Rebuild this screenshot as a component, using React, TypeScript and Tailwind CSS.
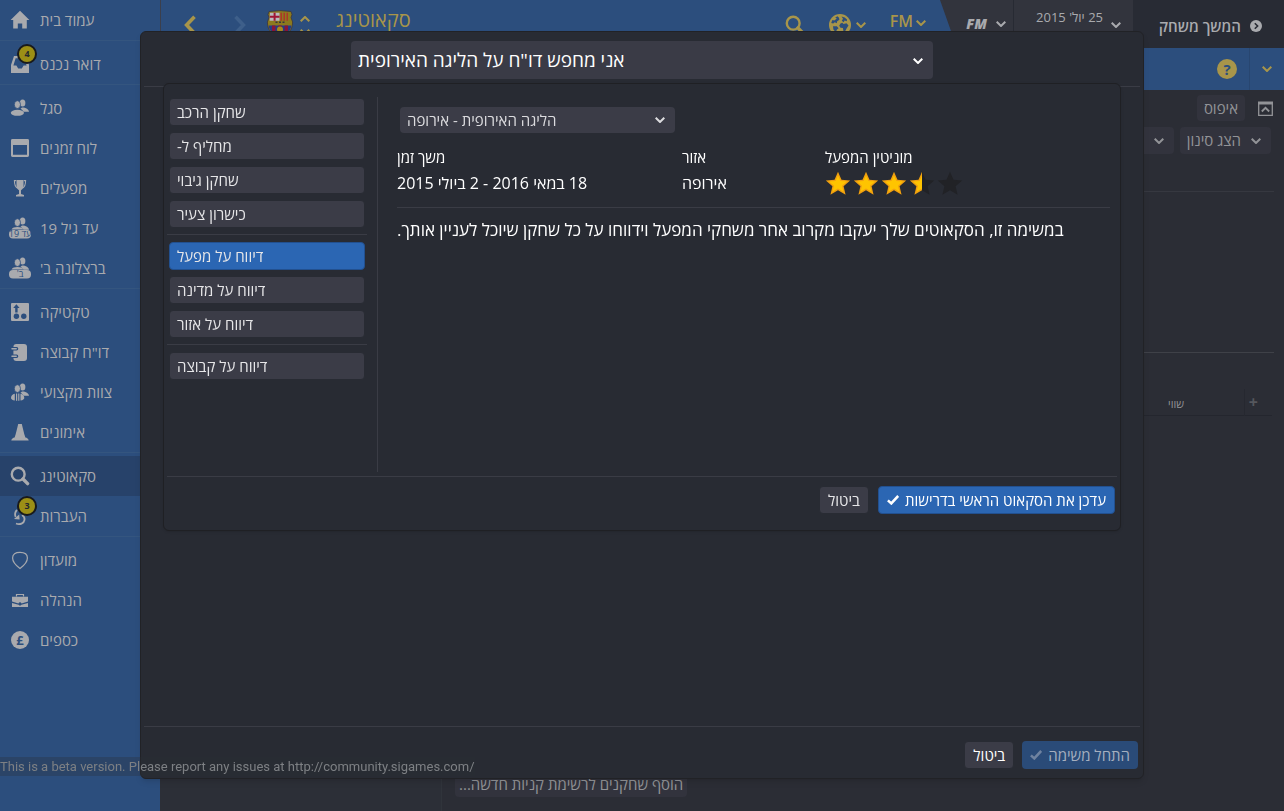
import type { ReactNode } from 'react';
import { clsx } from 'clsx';

type IconProps = { className?: string };

type NavItem = {
  label: string;
  icon: (props: IconProps) => ReactNode;
  badge?: number;
  active?: boolean;
};

function ChevronDown({ className }: IconProps) {
  return (
    <svg viewBox="0 0 10 6" className={clsx('h-[6px] w-[10px] shrink-0', className)} fill="none" stroke="currentColor" strokeWidth="2" aria-hidden="true">
      <path d="M0.7 0.7 5 5 9.3 0.7" />
    </svg>
  );
}

function ChevronLeft({ className }: IconProps) {
  return (
    <svg viewBox="0 0 12 20" className={clsx('h-5 w-3', className)} fill="none" stroke="currentColor" strokeWidth="3.6" aria-hidden="true">
      <path d="M10.5 1.8 2.6 10l7.9 8.2" />
    </svg>
  );
}

function Check({ className }: IconProps) {
  return (
    <svg viewBox="0 0 12 10" className={clsx('h-[10px] w-3 shrink-0', className)} fill="none" stroke="currentColor" strokeWidth="2.6" aria-hidden="true">
      <path d="M0.9 5.4 4.3 8.4 11.2 1" />
    </svg>
  );
}

function SearchIcon({ className }: IconProps) {
  return (
    <svg viewBox="0 0 20 20" className={className} fill="none" stroke="currentColor" aria-hidden="true">
      <circle cx="8.2" cy="8.2" r="6.4" strokeWidth="2.4" />
      <path d="m13 13 4.6 4.6" strokeWidth="3.4" strokeLinecap="round" />
    </svg>
  );
}

function HomeIcon({ className }: IconProps) {
  return (
    <svg viewBox="0 0 20 20" className={className} fill="currentColor" aria-hidden="true">
      <path d="M10 .8.6 10h2.6v8.6h4.6v-5h4.4v5h4.6V10h2.6z" />
    </svg>
  );
}

function InboxIcon({ className }: IconProps) {
  return (
    <svg viewBox="0 0 20 20" className={className} fill="currentColor" fillRule="evenodd" aria-hidden="true">
      <path d="M4 2h12l3 9v8H1v-8zm1.6 2.2L3.4 11.6h3l1.8 2.8h3.6l1.8-2.8h3l-2.2-7.4z" />
    </svg>
  );
}

function PeopleHeads() {
  return (
    <>
      <ellipse cx="12.6" cy="5" rx="2.8" ry="3.5" />
      <path d="M12 9.4c4 0 7 2 7 4.4h-5.5c-.8-1.6-1.8-2.4-3-3z" />
      <ellipse cx="7.4" cy="6.6" rx="3.1" ry="3.9" stroke="#2c4e7d" strokeWidth=".8" />
    </>
  );
}

function SquadIcon({ className }: IconProps) {
  return (
    <svg viewBox="0 0 20 20" className={className} fill="currentColor" aria-hidden="true">
      <PeopleHeads />
      <ellipse cx="7.4" cy="14.8" rx="6.6" ry="3" />
    </svg>
  );
}

function TeamPillIcon({ className, text }: IconProps & { text: string }) {
  return (
    <span className={clsx('relative block', className)} aria-hidden="true">
      <svg viewBox="0 0 20 20" className="size-5 overflow-visible" fill="currentColor">
        <g transform="translate(0 -2)">
          <PeopleHeads />
          <path d="M1.5 13.4c1-1.6 3-2.4 6-2.4s5 .8 6 2.4z" />
        </g>
        <rect x="-1" y="12" width="22" height="8.5" rx="4" />
      </svg>
      <span dir="rtl" className="absolute inset-x-[-4px] top-[12px] text-center text-[9px] leading-[8px] whitespace-nowrap text-[#2c4e7d]">
        {text}
      </span>
    </span>
  );
}

function Under19Icon(props: IconProps) {
  return <TeamPillIcon {...props} text="עד 19" />;
}

function BTeamIcon(props: IconProps) {
  return <TeamPillIcon {...props} text="ב'" />;
}

function CalendarIcon({ className }: IconProps) {
  return (
    <svg viewBox="0 0 20 20" className={className} fill="currentColor" fillRule="evenodd" aria-hidden="true">
      <path d="M2.4 1h15.2A1.4 1.4 0 0 1 19 2.4v15.2a1.4 1.4 0 0 1-1.4 1.4H2.4A1.4 1.4 0 0 1 1 17.6V2.4A1.4 1.4 0 0 1 2.4 1zM3 7v9.8h14V7z" />
    </svg>
  );
}

function TrophyIcon({ className }: IconProps) {
  return (
    <svg viewBox="0 0 20 20" className={className} aria-hidden="true">
      <path d="M6.5 2h7v5.5c0 3-1.6 4.7-3.5 5.2-1.9-.5-3.5-2.2-3.5-5.2z" fill="currentColor" />
      <path d="M6.2 2.6H4.4c0 4 .8 6.6 3.2 7.6M13.8 2.6h1.8c0 4-.8 6.6-3.2 7.6" fill="none" stroke="currentColor" strokeWidth="1.1" />
      <path d="M9 12h2v4l3 1v1.5H6V17l3-1z" fill="currentColor" />
    </svg>
  );
}

function TacticsIcon({ className }: IconProps) {
  return (
    <svg viewBox="0 0 20 20" className={className} aria-hidden="true">
      <rect x="1" y="1" width="18" height="18" rx="1" fill="currentColor" />
      <g fill="#2c4e7d">
        <circle cx="6.4" cy="14.3" r="2.7" />
        <circle cx="13.8" cy="14.3" r="2.7" />
        <path d="M6.4 2.2 3.2 6h2v4.5h2.4V6h2z" />
      </g>
    </svg>
  );
}

function ReportIcon({ className }: IconProps) {
  return (
    <svg viewBox="0 0 20 20" className={className} aria-hidden="true">
      <rect x="3.4" y="2" width="13.6" height="17" rx="3" fill="currentColor" />
      <path d="M2 6.8h4.6M2 14.2h4.6" stroke="#2c4e7d" strokeWidth="3.4" strokeLinecap="round" />
      <path d="M2 6.8h4.2M2 14.2h4.2" stroke="currentColor" strokeWidth="1.5" strokeLinecap="round" />
    </svg>
  );
}

function StaffIcon({ className }: IconProps) {
  return (
    <svg viewBox="0 0 20 20" className={className} fill="currentColor" aria-hidden="true">
      <PeopleHeads />
      <path d="M4.8 11.8c-2.4.5-3.8 2-3.8 4.2 0 1.2 1.3 2.2 3.8 2.5zM6 11.5h1.2v7.2H6zM8.2 11.5h1.2v7.2H8.2zM10.5 11.8c2.4.5 3.8 2 3.8 4.2 0 1.2-1.3 2.2-3.8 2.5z" />
    </svg>
  );
}

function TrainingIcon({ className }: IconProps) {
  return (
    <svg viewBox="0 0 20 20" className={className} fill="currentColor" aria-hidden="true">
      <path d="M8.2 2h3.6c1.2 4.4 2 9.4 3.6 13.4 1.6.3 3 1 3.3 3.1H1.3c.3-2.1 1.7-2.8 3.3-3.1C6.2 11.4 7 6.4 8.2 2z" />
    </svg>
  );
}

function TransfersIcon({ className }: IconProps) {
  return (
    <svg viewBox="0 0 20 20" className={className} aria-hidden="true">
      <g fill="none" stroke="currentColor" strokeWidth="1.8">
        <path d="M7 4c-2 2-2.4 4.4-1.4 7" />
        <path d="M6 17.5c4 1.6 8-.2 8.5-3.6.3-2-.8-3.9-2.5-4.9" />
      </g>
      <path d="M4 13 9.2 8.6l.4 5z" fill="currentColor" />
    </svg>
  );
}

function ClubIcon({ className }: IconProps) {
  return (
    <svg viewBox="0 0 20 20" className={className} fill="none" stroke="currentColor" strokeWidth="1.2" aria-hidden="true">
      <path d="M10 18.4C5.5 15.2 2.6 12.2 2.6 8c0-3.8 2.8-5.6 7.4-5.6S17.4 4.2 17.4 8c0 4.2-2.9 7.2-7.4 10.4z" />
    </svg>
  );
}

function BoardIcon({ className }: IconProps) {
  return (
    <svg viewBox="0 0 20 20" className={className} fill="currentColor" aria-hidden="true">
      <path d="M6.5 6.5v-2h7v2" fill="none" stroke="currentColor" strokeWidth="1.2" />
      <path d="M2 6.8h16v4.8l-6.5 1.8a1.6 1.6 0 0 0-3 0L2 11.6zM2 13l6.6 1.8a1.6 1.6 0 0 0 2.8 0L18 13v4H2z" />
    </svg>
  );
}

function FinanceIcon({ className }: IconProps) {
  return (
    <span className={clsx('grid place-items-center', className)} aria-hidden="true">
      <span className="grid size-[18px] place-items-center rounded-full bg-[#a9aaae] text-[13px] leading-none font-bold text-[#2c4e7d]">£</span>
    </span>
  );
}

function ClubCrest() {
  return (
    <svg viewBox="0 0 28 30" className="h-[30px] w-7 shrink-0" aria-hidden="true">
      <path d="M3 1.5 14 .6l11 .9 1 3-1 3 1.6 4.5c0 9-5.6 13.6-12.6 17C7 25.6 1.4 21 1.4 12L3 7.5l-1-3z" fill="#8c7a1e" stroke="#3a3540" strokeWidth=".8" />
      <path d="M4 2.8h9.5v8H3.6z" fill="#b9b9bd" />
      <path d="M7.6 2.8h2v8h-2zM3.8 5.8h9.7v2H3.8z" fill="#a01535" />
      <path d="M14.5 2.8h1.4v8h-1.4zM17.5 2.8h1.4v8h-1.4zM20.5 2.8h1.4v8h-1.4z" fill="#b0302a" />
      <path d="M2.6 15.5h22.8c-.8 6-5 9.4-11.4 12.3C7.6 24.9 3.4 21.5 2.6 15.5z" fill="#243c86" />
      <path d="M6 15.5h3.4v9.3L6 22zM12.3 15.5h3.4v11.4l-1.7.9-1.7-.9zM18.6 15.5H22V22l-3.4 2.8z" fill="#8a1538" />
      <path d="M9.5 12.3h2M13 12.3h2M16.5 12.3h2" stroke="#3a3540" strokeWidth="1.4" />
      <circle cx="14" cy="19.5" r="3" fill="#a8891c" />
    </svg>
  );
}

function GlobeIcon() {
  return (
    <svg viewBox="0 0 22 22" className="size-[22px]" aria-hidden="true">
      <circle cx="11" cy="11" r="11" fill="#a8954a" />
      <path d="M8.5 2.2 6.2 3.5l1.6 1-2.4 2-2-.6-1.2 3 2 .6 1.6-1.2 2 1 .4-2 2.200-1.500-.4-2z" fill="#2c4e7d" />
      <path d="m12.5 2.4 1.5 2.4-1.2 2 1.8 1.4 1-1.6 2.2.6.2-1.8-2.3-1.8zM11.5 9.5l-1.3 2.2 1.3 2 2.4.3.6 3.4 1.5.2 1.7-3.4 1.8-2.6-2-2.4-3 .8-1.2-1.2zM4 12.2l.4 3.2 2.4 2.8 1.2-2.6 1.6-1.4-1.8-2z" fill="#2c4e7d" />
    </svg>
  );
}

const starPath = 'M13 .8l3.5 8 8.7.8-6.6 5.7 2 8.5-7.6-4.5-7.6 4.5 2-8.5L.8 9.6l8.7-.8z';

function Star({ fill }: { fill: 'full' | 'half' | 'empty' }) {
  return (
    <svg viewBox="0 0 26 25" className="h-[25px] w-[26px]" aria-hidden="true">
      <path d={starPath} fill="#212226" />
      {fill !== 'empty' && (
        <svg width={fill === 'half' ? 13 : 26} height="25">
          <path d={starPath} fill="#f0a010" />
          <path d="M13 4.5l2.5 5.5 6.4.6-4.9 4.1 1.5 6L13 17.6l-5.5 3.1 1.5-6-4.9-4.1 6.4-.6z" fill="#ffc400" />
        </svg>
      )}
    </svg>
  );
}

const navGroups: NavItem[][] = [
  [{ label: 'עמוד בית', icon: HomeIcon }],
  [{ label: 'דואר נכנס', icon: InboxIcon, badge: 4 }],
  [
    { label: 'סגל', icon: SquadIcon },
    { label: 'לוח זמנים', icon: CalendarIcon },
    { label: 'מפעלים', icon: TrophyIcon },
    { label: 'עד גיל 19', icon: Under19Icon },
    { label: "ברצלונה ב'", icon: BTeamIcon },
  ],
  [
    { label: 'טקטיקה', icon: TacticsIcon },
    { label: 'דו"ח קבוצה', icon: ReportIcon },
    { label: 'צוות מקצועי', icon: StaffIcon },
    { label: 'אימונים', icon: TrainingIcon },
  ],
  [
    { label: 'סקאוטינג', icon: SearchIcon, active: true },
    { label: 'העברות', icon: TransfersIcon, badge: 3 },
  ],
  [
    { label: 'מועדון', icon: ClubIcon },
    { label: 'הנהלה', icon: BoardIcon },
    { label: 'כספים', icon: FinanceIcon },
  ],
];

const assignmentGroups = [
  ['שחקן הרכב', 'מחליף ל-', 'שחקן גיבוי', 'כישרון צעיר'],
  ['דיווח על מפעל', 'דיווח על מדינה', 'דיווח על אזור'],
  ['דיווח על קבוצה'],
];

const selectedAssignment = 'דיווח על מפעל';

function Sidebar() {
  return (
    <nav className="w-40 shrink-0 bg-[#2c4e7d]">
      {navGroups.map((group, index) => (
        <ul key={index} className={clsx(index > 0 && 'border-t border-[#34557f] pt-[3px]')}>
          {group.map(({ label, icon: Icon, badge, active }) => (
            <li key={label}>
              <a
                href="#"
                className={clsx('relative flex h-10 items-center gap-[10px] pl-[10px] text-[15px] text-[#a9aaae]', active && 'bg-[#27426a]')}
              >
                <Icon className="size-5 shrink-0" />
                <span dir="rtl">{label}</span>
                {badge && (
                  <span className="absolute top-0 left-[17px] grid size-5 place-items-center rounded-full border-2 border-[#191a1c] bg-[#9c8f16] text-[9px] font-bold text-[#26282c]">
                    {badge}
                  </span>
                )}
              </a>
            </li>
          ))}
        </ul>
      ))}
    </nav>
  );
}

function TopBar() {
  return (
    <header className="bg-[#2c4e7d] text-[#a8954a]">
      <div className="flex h-12 border-l border-[#3b3f4c]">
        <div className="flex flex-1 items-start pl-[23px]">
          <button aria-label="אחורה" className="mt-[15px]"><ChevronLeft /></button>
          <button aria-label="קדימה" className="mt-[15px] ml-[38px] text-[#3e5f8a]"><ChevronLeft className="rotate-180" /></button>
          <div className="mt-[10px] ml-5 flex gap-[6px]">
            <ClubCrest />
            <span className="flex flex-col justify-center gap-[7px]">
              <ChevronDown className="rotate-180" />
              <ChevronDown />
            </span>
          </div>
          <h1 dir="rtl" className="mt-[6px] ml-[26px] text-xl leading-7">סקאוטינג</h1>
        </div>
        <div className="flex items-start pt-[10px]">
          <button aria-label="חיפוש"><SearchIcon className="mt-[5px] size-5" /></button>
          <button aria-label="עולם" className="mt-1 ml-6 flex items-center gap-[5px]"><GlobeIcon /><ChevronDown /></button>
          <button className="ml-6 flex flex-col items-center">
            <span className="flex items-center gap-[3px] text-base leading-[22px] font-semibold">FM<ChevronDown className="mt-1" /></span>
            <span className="text-[9px] leading-3">ישראל</span>
          </button>
        </div>
        <div className="ml-[14px] flex bg-[#32343d] text-[#a9aaae] [clip-path:polygon(0_0,100%_0,100%_100%,17px_100%)]">
          <button className="flex w-[74px] items-center justify-end gap-[9px] border-r border-[#272a33] pr-[7px]">
            <span className="text-sm font-black italic">FM</span>
            <ChevronDown />
          </button>
          <button className="flex w-[119px] items-start justify-end gap-2 pt-2 pr-3">
            <span dir="rtl" className="text-right text-[13px] leading-[18px]">
              25 יול' 2015
              <br />
              שבת 7:00
            </span>
            <ChevronDown className="mt-[14px]" />
          </button>
          <button className="flex w-[151px] items-center justify-end gap-[9px] bg-[#282b34] pt-1 pr-[22px] text-[15px] font-semibold">
            <span dir="rtl">המשך משחק</span>
            <svg viewBox="0 0 12 12" className="size-3" aria-hidden="true">
              <circle cx="6" cy="6" r="6" fill="currentColor" />
              <path d="m4.8 3.2 2.8 2.8-2.8 2.8" fill="none" stroke="#282b34" strokeWidth="1.6" />
            </svg>
          </button>
        </div>
      </div>
      <div className="flex h-[42px] justify-end">
        <button aria-label="עזרה" className="mr-3 self-center">
          <span className="grid size-5 place-items-center rounded-full bg-[#a8954a] text-[15px] leading-none font-bold text-[#2c4e7d]">?</span>
        </button>
        <button aria-label="עוד" className="grid w-[35px] place-items-center border-l border-[#284670]"><ChevronDown /></button>
      </div>
    </header>
  );
}

function ScoutingPage() {
  return (
    <main className="flex flex-1 flex-col text-[15px] text-[#929397]">
      <div className="flex items-center justify-end gap-[13px] pt-[5px] pr-[11px]">
        <button dir="rtl" className="h-[26px] rounded-sm bg-[#32333d] px-[7px]">איפוס</button>
        <button aria-label="כווץ">
          <svg viewBox="0 0 15 15" className="size-[15px]" fill="none" stroke="currentColor" aria-hidden="true">
            <path d="M.7 1v13.3h13.6V1" strokeWidth="1.3" />
            <path d="M0 2h15" strokeWidth="3" />
            <path d="m3.8 10.5 3.7-3.7 3.7 3.7" strokeWidth="1.8" />
          </svg>
        </button>
      </div>
      <div className="mr-[10px] flex justify-end gap-[6px] border-b border-[#363840] pt-[6px] pr-[3px] pb-[37px]">
        <button className="flex h-[27px] items-center gap-4 rounded-sm bg-[#32333d] px-[10px]"><span dir="rtl">אפשרויות</span><ChevronDown /></button>
        <button className="flex h-[27px] items-center gap-[10px] rounded-sm bg-[#32333d] pr-[10px] pl-[7px]"><span dir="rtl">הצג סינון</span><ChevronDown /></button>
      </div>
      <div className="mr-[10px] h-[161px] border-b border-[#3f4148]" />
      <table className="mt-9 mr-3 text-[11px]">
        <thead>
          <tr className="h-[26px] border-b border-[#24262e]">
            <th />
            <th className="w-20 pt-1 pl-1 text-left font-normal whitespace-nowrap"><span dir="rtl">שווי</span></th>
            <th className="w-7 border-l border-[#262830] pr-[10px] text-base leading-none text-[#55575d]">+</th>
          </tr>
        </thead>
      </table>
      <div className="mt-auto flex">
        <div className="h-10 w-[282px] border-r border-[#30343b] bg-[#2c2f37]" />
        <div className="pl-[13px]">
          <button dir="rtl" className="h-[26px] rounded-sm bg-[#32333d] px-1">הוסף שחקנים לרשימת קניות חדשה...</button>
        </div>
      </div>
    </main>
  );
}

function AssignmentMenu() {
  return (
    <div className="w-[200px] shrink-0 pt-px">
      {assignmentGroups.map((group, index) => (
        <div key={index} className={clsx('flex flex-col gap-[6px] px-[2px]', index > 0 && 'mt-[6px] border-t border-[#3a3c45] pt-[7px]')}>
          {group.map((label) => (
            <button
              key={label}
              className={clsx(
                'h-7 rounded border px-[7px] text-left text-[15px] text-[#e6e6e8]',
                label === selectedAssignment ? 'border-[#22508f] bg-[#2b66b3]' : 'border-[#282b33] bg-[#3b3c47]',
              )}
            >
              <span dir="rtl">{label}</span>
            </button>
          ))}
        </div>
      ))}
    </div>
  );
}

function CompetitionDetails() {
  return (
    <section className="flex-1 border-l border-[#3a3c45] pr-[7px] pl-[19px] text-white">
      <div className="relative ml-[3px] w-[275px] pt-[10px]">
        <select aria-label="מפעל" dir="rtl" className="block h-[26px] w-full appearance-none rounded-sm bg-[#3b3c47] px-[7px] text-left text-[15px] text-[#dcdcdf]">
          <option>הליגה האירופית - אירופה</option>
        </select>
        <ChevronDown className="pointer-events-none absolute right-[10px] bottom-[10px] text-[#dcdcdf]" />
      </div>
      <dl className="grid h-[75px] grid-cols-[285px_143px_1fr] border-b border-[#3a3c45] pt-[14px]">
        <div>
          <dt dir="rtl" className="text-left text-[15px] leading-5">משך זמן</dt>
          <dd dir="rtl" className="mt-1 text-left text-base leading-6">18 במאי 2016 - 2 ביולי 2015</dd>
        </div>
        <div>
          <dt dir="rtl" className="text-left text-[15px] leading-5">אזור</dt>
          <dd dir="rtl" className="mt-1 text-left text-base leading-6">אירופה</dd>
        </div>
        <div>
          <dt dir="rtl" className="text-left text-[15px] leading-5">מוניטין המפעל</dt>
          <dd className="mt-1 flex gap-[2px]">
            <Star fill="full" />
            <Star fill="full" />
            <Star fill="full" />
            <Star fill="half" />
            <Star fill="empty" />
          </dd>
        </div>
      </dl>
      <p dir="rtl" className="mt-[10px] text-left text-[17px] leading-6">
        במשימה זו, הסקאוטים שלך יעקבו מקרוב אחר משחקי המפעל וידווחו על כל שחקן שיוכל לעניין אותך.
      </p>
    </section>
  );
}

function AssignmentDialog() {
  return (
    <div className="fixed inset-0 flex pt-[31px] pr-[140px] pb-8 pl-[140px]">
      <div role="dialog" aria-label="משימת סקאוטינג" className="flex flex-1 flex-col rounded-md border border-[#212226] bg-[#282b33] px-[3px] shadow-md">
        <div className="border-b border-[#3a3c45] pt-[9px] pb-[7px]">
          <div className="relative mx-auto w-[582px]">
            <select aria-label="סוג משימה" dir="rtl" className="block h-[38px] w-full appearance-none rounded-sm bg-[#3a3b46] px-[7px] text-left text-[19px] text-white">
              <option>אני מחפש דו"ח על הליגה האירופית</option>
            </select>
            <ChevronDown className="pointer-events-none absolute top-[17px] right-[10px] text-white" />
          </div>
        </div>

        <div className="relative mx-[19px] -mt-1 flex h-[448px] flex-col rounded-md border border-[#1f2024] bg-[#282b33] px-[3px] shadow">
          <div className="flex flex-1 gap-[10px] pt-[13px] pb-1">
            <AssignmentMenu />
            <CompetitionDetails />
          </div>
          <div className="flex h-[54px] items-start justify-end gap-[9px] border-t border-[#3a3c45] pt-[9px] pr-[2px]">
            <button dir="rtl" className="h-7 rounded border border-[#282b33] bg-[#3b3c47] px-2 text-[15px] text-[#e6e6e8]">ביטול</button>
            <button className="flex h-7 items-center gap-[6px] rounded border border-[#22508f] bg-[#2b66b3] px-2 text-[15px] text-white">
              <Check />
              <span dir="rtl">עדכן את הסקאוט הראשי בדרישות</span>
            </button>
          </div>
        </div>

        <div className="mt-auto flex h-[52px] items-start justify-end gap-2 border-t border-[#3a3c45] pt-[14px] pr-[2px]">
          <button dir="rtl" className="h-7 rounded border border-[#282b33] bg-[#3b3c47] px-2 text-[15px] text-white">ביטול</button>
          <button disabled className="flex h-7 items-center gap-[6px] rounded bg-[#2a4b78] px-2 text-[15px] text-[#a5afbf]">
            <Check className="text-[#6f83a0]" />
            <span dir="rtl">התחל משימה</span>
          </button>
        </div>
      </div>
    </div>
  );
}

export default function App() {
  return (
    <div className="flex h-screen overflow-hidden bg-[#2b2d35] font-['Open_Sans','Liberation_Sans',sans-serif]">
      <Sidebar />
      <div className="flex min-w-0 flex-1 flex-col">
        <TopBar />
        <ScoutingPage />
      </div>
      <AssignmentDialog />
      <p className="fixed bottom-[35px] left-0 bg-[#2b2d35]/30 font-['Roboto',sans-serif] text-[13px] leading-[19px] text-[#7d8084]">
        This is a beta version. Please report any issues at http://community.sigames.com/
      </p>
    </div>
  );
}
